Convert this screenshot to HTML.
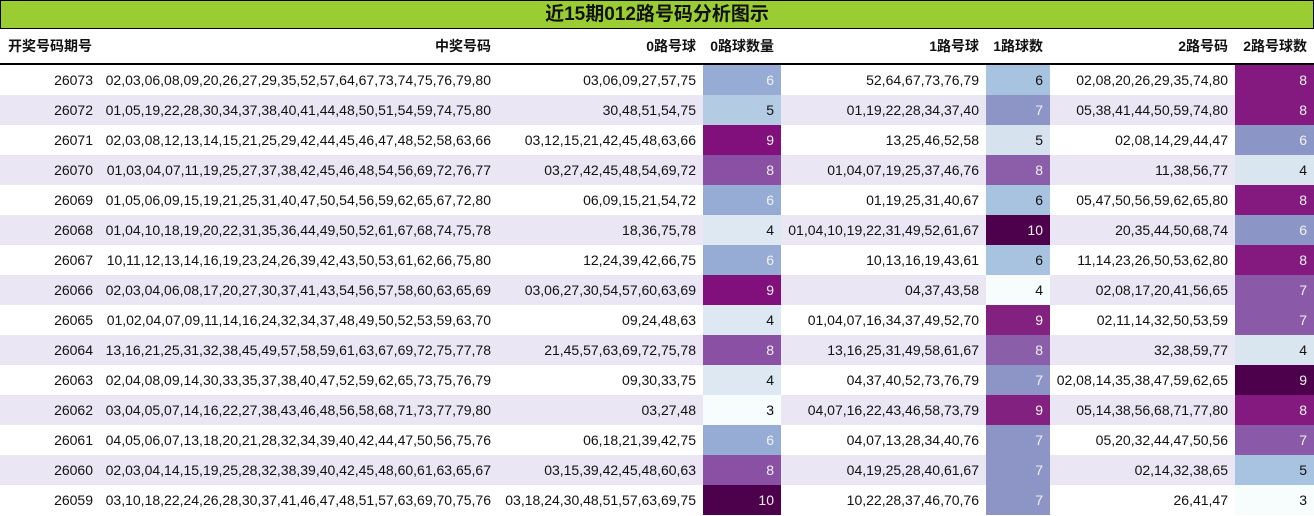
<!DOCTYPE html><html><head><meta charset="utf-8"><style>
body{margin:0;width:1314px;height:516px;overflow:hidden;background:#fff;font-family:"Liberation Sans","Noto Sans CJK SC",sans-serif;font-size:14px;color:#111}
.t{position:absolute;left:0;top:0;width:1312px;height:27px;background:#9acd32;border:1px solid #000;text-align:center;font-weight:bold;font-size:19px;line-height:28px;color:#111}
table{position:absolute;left:0;top:29px;border-collapse:collapse;table-layout:fixed;width:1314px}
td,th{padding:0 7px 0 0;text-align:right;white-space:nowrap;overflow:hidden}
th{height:34px;border-bottom:2px solid #000;font-weight:bold;font-size:14px}
th:first-child{text-align:center;padding:0}
td{height:30px}
tr.a td{background:#ebe6f4}
.w{color:#f1f1f1}
</style></head><body>
<div class="t">近15期012路号码分析图示</div>
<table>
<colgroup><col style="width:100px"><col style="width:398px"><col style="width:205px"><col style="width:78px"><col style="width:205px"><col style="width:64px"><col style="width:185px"><col style="width:79px"></colgroup>
<tr><th>开奖号码期号</th><th>中奖号码</th><th>0路号球</th><th>0路球数量</th><th>1路号球</th><th>1路球数</th><th>2路号码</th><th>2路号球数</th></tr>
<tr><td>26073</td><td>02,03,06,08,09,20,26,27,29,35,52,57,64,67,73,74,75,76,79,80</td><td>03,06,09,27,57,75</td><td class="w" style="background:#96acd4">6</td><td>52,64,67,73,76,79</td><td style="background:#a8c3e0">6</td><td>02,08,20,26,29,35,74,80</td><td class="w" style="background:#84197f">8</td></tr>
<tr class="a"><td>26072</td><td>01,05,19,22,28,30,34,37,38,40,41,44,48,50,51,54,59,74,75,80</td><td>30,48,51,54,75</td><td style="background:#b3cbe3">5</td><td>01,19,22,28,34,37,40</td><td class="w" style="background:#8c95c6">7</td><td>05,38,41,44,50,59,74,80</td><td class="w" style="background:#84197f">8</td></tr>
<tr><td>26071</td><td>02,03,08,12,13,14,15,21,25,29,42,44,45,46,47,48,52,58,63,66</td><td>03,12,15,21,42,45,48,63,66</td><td class="w" style="background:#810f7c">9</td><td>13,25,46,52,58</td><td style="background:#d6e3ef">5</td><td>02,08,14,29,44,47</td><td class="w" style="background:#8c96c6">6</td></tr>
<tr class="a"><td>26070</td><td>01,03,04,07,11,19,25,27,37,38,42,45,46,48,54,56,69,72,76,77</td><td>03,27,42,45,48,54,69,72</td><td class="w" style="background:#8a50a4">8</td><td>01,04,07,19,25,37,46,76</td><td class="w" style="background:#8b5ea9">8</td><td>11,38,56,77</td><td style="background:#d9e6f0">4</td></tr>
<tr><td>26069</td><td>01,05,06,09,15,19,21,25,31,40,47,50,54,56,59,62,65,67,72,80</td><td>06,09,15,21,54,72</td><td class="w" style="background:#96acd4">6</td><td>01,19,25,31,40,67</td><td style="background:#a8c3e0">6</td><td>05,47,50,56,59,62,65,80</td><td class="w" style="background:#84197f">8</td></tr>
<tr class="a"><td>26068</td><td>01,04,10,18,19,20,22,31,35,36,44,49,50,52,61,67,68,74,75,78</td><td>18,36,75,78</td><td style="background:#dde8f2">4</td><td>01,04,10,19,22,31,49,52,61,67</td><td class="w" style="background:#4d004b">10</td><td>20,35,44,50,68,74</td><td class="w" style="background:#8c96c6">6</td></tr>
<tr><td>26067</td><td>10,11,12,13,14,16,19,23,24,26,39,42,43,50,53,61,62,66,75,80</td><td>12,24,39,42,66,75</td><td class="w" style="background:#96acd4">6</td><td>10,13,16,19,43,61</td><td style="background:#a8c3e0">6</td><td>11,14,23,26,50,53,62,80</td><td class="w" style="background:#84197f">8</td></tr>
<tr class="a"><td>26066</td><td>02,03,04,06,08,17,20,27,30,37,41,43,54,56,57,58,60,63,65,69</td><td>03,06,27,30,54,57,60,63,69</td><td class="w" style="background:#810f7c">9</td><td>04,37,43,58</td><td style="background:#f7fcfd">4</td><td>02,08,17,20,41,56,65</td><td class="w" style="background:#8a5aa8">7</td></tr>
<tr><td>26065</td><td>01,02,04,07,09,11,14,16,24,32,34,37,48,49,50,52,53,59,63,70</td><td>09,24,48,63</td><td style="background:#dde8f2">4</td><td>01,04,07,16,34,37,49,52,70</td><td class="w" style="background:#832180">9</td><td>02,11,14,32,50,53,59</td><td class="w" style="background:#8a5aa8">7</td></tr>
<tr class="a"><td>26064</td><td>13,16,21,25,31,32,38,45,49,57,58,59,61,63,67,69,72,75,77,78</td><td>21,45,57,63,69,72,75,78</td><td class="w" style="background:#8a50a4">8</td><td>13,16,25,31,49,58,61,67</td><td class="w" style="background:#8b5ea9">8</td><td>32,38,59,77</td><td style="background:#d9e6f0">4</td></tr>
<tr><td>26063</td><td>02,04,08,09,14,30,33,35,37,38,40,47,52,59,62,65,73,75,76,79</td><td>09,30,33,75</td><td style="background:#dde8f2">4</td><td>04,37,40,52,73,76,79</td><td class="w" style="background:#8c95c6">7</td><td>02,08,14,35,38,47,59,62,65</td><td class="w" style="background:#4d004b">9</td></tr>
<tr class="a"><td>26062</td><td>03,04,05,07,14,16,22,27,38,43,46,48,56,58,68,71,73,77,79,80</td><td>03,27,48</td><td style="background:#f7fcfd">3</td><td>04,07,16,22,43,46,58,73,79</td><td class="w" style="background:#832180">9</td><td>05,14,38,56,68,71,77,80</td><td class="w" style="background:#84197f">8</td></tr>
<tr><td>26061</td><td>04,05,06,07,13,18,20,21,28,32,34,39,40,42,44,47,50,56,75,76</td><td>06,18,21,39,42,75</td><td class="w" style="background:#96acd4">6</td><td>04,07,13,28,34,40,76</td><td class="w" style="background:#8c95c6">7</td><td>05,20,32,44,47,50,56</td><td class="w" style="background:#8a5aa8">7</td></tr>
<tr class="a"><td>26060</td><td>02,03,04,14,15,19,25,28,32,38,39,40,42,45,48,60,61,63,65,67</td><td>03,15,39,42,45,48,60,63</td><td class="w" style="background:#8a50a4">8</td><td>04,19,25,28,40,61,67</td><td class="w" style="background:#8c95c6">7</td><td>02,14,32,38,65</td><td style="background:#a8c3e0">5</td></tr>
<tr><td>26059</td><td>03,10,18,22,24,26,28,30,37,41,46,47,48,51,57,63,69,70,75,76</td><td>03,18,24,30,48,51,57,63,69,75</td><td class="w" style="background:#4d004b">10</td><td>10,22,28,37,46,70,76</td><td class="w" style="background:#8c95c6">7</td><td>26,41,47</td><td style="background:#f7fcfd">3</td></tr>
</table>
</body></html>
